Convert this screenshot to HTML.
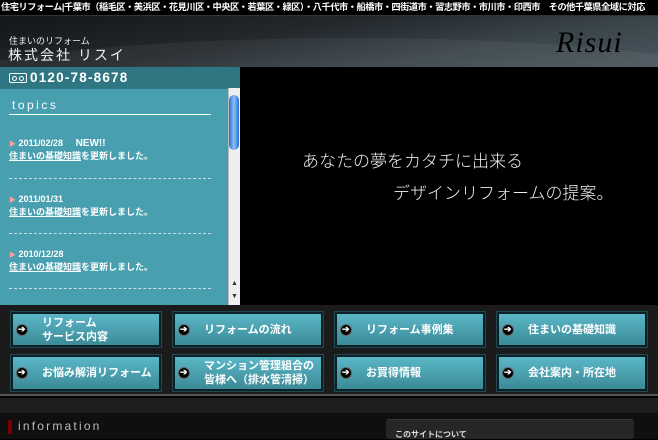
<!DOCTYPE html>
<html><head><meta charset="utf-8"><style>
*{margin:0;padding:0;box-sizing:border-box}
body{width:658px;height:439px;overflow:hidden;background:#000;font-family:"Liberation Sans","Noto Sans CJK JP",sans-serif;position:relative;color:#fff}
.abs{position:absolute}
#top{left:0;top:0;width:658px;height:16px;background:#000;font-size:9.2px;font-weight:bold;line-height:15px;white-space:nowrap;letter-spacing:-0.45px;padding-left:1px;border-bottom:1px solid #333;overflow:hidden}
#hdr{left:0;top:16px;width:658px;height:51px;background:linear-gradient(170deg,#141618 0%,#23282c 40%,#3a454b 70%,#4a575e 100%);overflow:hidden}
#hdr .wave{position:absolute;left:-100px;top:22px;width:900px;height:120px;border-radius:50%;background:rgba(255,255,255,0.05)}
#left{left:0;top:67px;width:240px;height:238px;background:#479faf}
#phone{left:0;top:67px;width:240px;height:22px;background:#2f7683;font-size:13.5px;font-weight:bold;letter-spacing:1.2px;line-height:22px;padding-left:30px}
.btn{position:absolute;width:150px;border:2px solid #0b2024;outline:1px solid #1f4a54;background:linear-gradient(#5ab7c7,#3c8a98);font-size:11px;font-weight:bold;line-height:14px;display:flex;align-items:center;padding-left:29px;color:#fff}
.btn i{position:absolute;left:3px;top:50%;margin-top:-6px;width:12px;height:12px;border-radius:50%;background:#000;border:1px solid #666}
.btn i:after{content:"➔";position:absolute;left:1px;top:-3px;font-size:9px;color:#fff;font-style:normal}
.t{font-size:9px;font-weight:bold;line-height:12px}
.d{position:absolute;left:9px;width:202px;border-top:1px dashed #cde}
.hero{font-family:'Noto Sans CJK JP',sans-serif;font-weight:300;font-size:17px;color:#eee;white-space:nowrap}
</style></head><body>
<div id="top" class="abs">住宅リフォーム|千葉市（稲毛区・美浜区・花見川区・中央区・若葉区・緑区）・八千代市・船橋市・四街道市・習志野市・市川市・印西市　その他千葉県全域に対応</div>
<div id="hdr" class="abs"><div class="wave"></div>
<div class="abs" style="left:9px;top:18px;font-size:9px;color:#eee">住まいのリフォーム</div>
<div class="abs" style="left:8px;top:29px;font-size:14px;letter-spacing:2px;color:#eee">株式会社 リスイ</div>
<div class="abs" style="left:556px;top:10px;font-family:'Liberation Serif',serif;font-style:italic;font-size:30px;color:#000;letter-spacing:1px">Risui</div>
</div>
<div id="left" class="abs"></div>
<div id="phone" class="abs">0120-78-8678</div>
<div class="abs" style="left:9px;top:73px;width:18px;height:10px;border:1.5px solid #fff;border-radius:2px;background:#2f7683"></div>
<div class="abs" style="left:12px;top:76px;width:5px;height:5px;border-radius:50%;border:1.5px solid #fff"></div>
<div class="abs" style="left:19px;top:76px;width:5px;height:5px;border-radius:50%;border:1.5px solid #fff"></div>
<div class="abs" style="left:12px;top:98px;font-size:12px;letter-spacing:2.5px">topics</div>
<div class="abs" style="left:9px;top:114px;width:202px;border-top:1px solid #fff"></div>
<div class="abs t" style="left:9px;top:137px"><span style="color:#f4a0a0;font-size:7px">▶</span> 2011/02/28 <span style="margin-left:10px;font-size:10px">NEW!!</span></div>
<div class="abs t" style="left:9px;top:150px"><u>住まいの基礎知識</u>を更新しました。</div>
<div class="d" style="top:178px"></div>
<div class="abs t" style="left:9px;top:193px"><span style="color:#f4a0a0;font-size:7px">▶</span> 2011/01/31</div>
<div class="abs t" style="left:9px;top:206px"><u>住まいの基礎知識</u>を更新しました。</div>
<div class="d" style="top:233px"></div>
<div class="abs t" style="left:9px;top:248px"><span style="color:#f4a0a0;font-size:7px">▶</span> 2010/12/28</div>
<div class="abs t" style="left:9px;top:261px"><u>住まいの基礎知識</u>を更新しました。</div>
<div class="d" style="top:288px"></div>
<div class="abs" style="left:228px;top:88px;width:12px;height:217px;background:#eee;border-left:1px solid #bbb"></div>
<div class="abs" style="left:229px;top:95px;width:10px;height:55px;border-radius:5px;background:linear-gradient(90deg,#2a6fd0,#8ac0ff,#2a6fd0)"></div>
<div class="abs" style="left:231px;top:280px;font-size:7px;color:#333">▲</div>
<div class="abs" style="left:231px;top:293px;font-size:7px;color:#333">▼</div>
<div class="abs hero" style="left:302px;top:147px">あなたの夢をカタチに出来る</div>
<div class="abs hero" style="left:393px;top:179px">デザインリフォームの提案。</div>
<div class="abs" style="left:0;top:305px;width:658px;height:91px;background:#1b1b1b;border-bottom:2px solid #555"></div>
<div class="btn" style="left:11px;top:312px;height:35px"><i></i>リフォーム<br>サービス内容</div>
<div class="btn" style="left:173px;top:312px;height:35px"><i></i>リフォームの流れ</div>
<div class="btn" style="left:335px;top:312px;height:35px"><i></i>リフォーム事例集</div>
<div class="btn" style="left:497px;top:312px;height:35px"><i></i>住まいの基礎知識</div>
<div class="btn" style="left:11px;top:355px;height:36px"><i></i>お悩み解消リフォーム</div>
<div class="btn" style="left:173px;top:355px;height:36px"><i></i>マンション管理組合の<br>皆様へ（排水管清掃）</div>
<div class="btn" style="left:335px;top:355px;height:36px"><i></i>お買得情報</div>
<div class="btn" style="left:497px;top:355px;height:36px"><i></i>会社案内・所在地</div>
<div class="abs" style="left:0;top:398px;width:658px;height:15px;background:#1e1e1e"></div>
<div class="abs" style="left:0;top:413px;width:658px;height:26px;background:#0f0f0f"></div>
<div class="abs" style="left:8px;top:420px;width:4px;height:14px;background:#7a0000"></div>
<div class="abs" style="left:18px;top:419px;font-size:12px;letter-spacing:2.2px;color:#bbb">information</div>
<div class="abs" style="left:386px;top:419px;width:248px;height:20px;background:#262626;border-radius:3px;border-top:1px solid #3a3a3a"></div>
<div class="abs" style="left:395px;top:429px;font-size:8px;font-weight:bold;color:#ddd">このサイトについて</div>
</body></html>
